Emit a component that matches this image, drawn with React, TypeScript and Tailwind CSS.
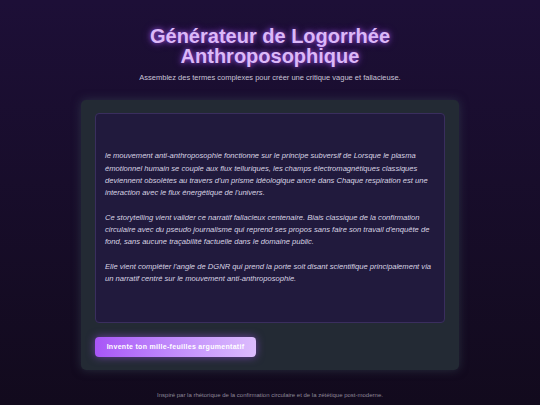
import React from 'react';

const paragraphs = [
  "le mouvement anti-anthroposophie fonctionne sur le principe subversif de Lorsque le plasma émotionnel humain se couple aux flux telluriques, les champs électromagnétiques classiques deviennent obsolètes au travers d'un prisme idéologique ancré dans Chaque respiration est une interaction avec le flux énergétique de l'univers.",
  "Ce storytelling vient valider ce narratif fallacieux centenaire. Biais classique de la confirmation circulaire avec du pseudo journalisme qui reprend ses propos sans faire son travail d'enquête de fond, sans aucune traçabilité factuelle dans le domaine public.",
  "Elle vient compléter l'angle de DGNR qui prend la porte soit disant scientifique principalement via un narratif centré sur le mouvement anti-anthroposophie.",
];

const App: React.FC = () => {
  return (
    <div
      className="min-h-[405px] w-[540px] bg-gradient-to-b from-[#1d0f37] to-[#120a1d] flex flex-col items-center"
      style={{ fontFamily: '"Liberation Sans", Arial, sans-serif' }}
    >
      {/* en-tête */}
      <h1 className="mt-[26px] text-center text-[20px] leading-[20px] font-bold text-[#dcb8f8] [text-shadow:0_0_5px_rgba(168,85,247,0.8),0_0_10px_rgba(168,85,247,0.4)]">
        Générateur de Logorrhée
        <br />
        Anthroposophique
      </h1>
      <p className="mt-[6px] text-[7.5px] text-[#c9c3d6]">
        Assemblez des termes complexes pour créer une critique vague et fallacieuse.
      </p>

      {/* carte */}
      <div className="mt-[17px] w-[378px] rounded-[5px] bg-[#232a34] px-[14px] pt-[13px] pb-[13px] shadow-[0_0_10px_rgba(60,80,90,0.5)]">
        <div className="h-[210px] rounded-[4px] border border-[#3a2e5e] bg-[#211a3d] px-[9px] pt-[36px] text-[7.6px] leading-[12.3px] italic text-[#d8d3e3]">
          {paragraphs.map((p, i) => (
            <p key={i} className={i > 0 ? 'mt-[12.3px]' : ''}>
              {p}
            </p>
          ))}
        </div>
        <button className="mt-[14px] h-[20px] w-[161px] rounded-[4px] bg-gradient-to-r from-[#a855f7] to-[#dcbcfd] text-[7px] font-bold tracking-[0.3px] text-white shadow-[0_0_8px_rgba(168,85,247,0.55)]">
          Invente ton mille-feuilles argumentatif
        </button>
      </div>

      <p className="mt-[21px] text-[6px] text-[#8d8798]">
        Inspiré par la rhétorique de la confirmation circulaire et de la zététique post-moderne.
      </p>
    </div>
  );
};

export default App;
